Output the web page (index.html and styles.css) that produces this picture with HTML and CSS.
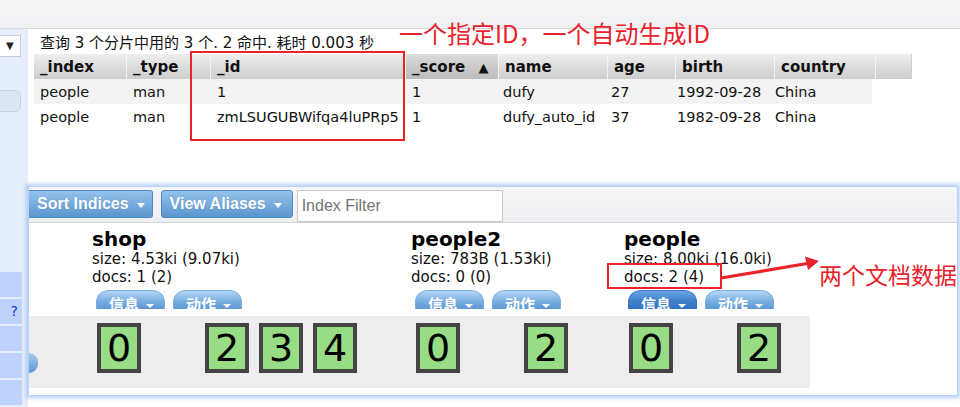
FILE: index.html
```html
<!DOCTYPE html>
<html lang="zh-CN">
<head>
<meta charset="utf-8">
<title>elasticsearch-head</title>
<link rel="stylesheet" href="styles.css">
</head>
<body>
<div class="page">
  <header class="topbar"></header>
  <div class="frame">
    <aside class="side">
      <div class="side-select">▼</div>
      <div class="side-pill"></div>
      <div class="side-cells">
        <div class="cell"></div>
        <div class="cell"><span class="help">?</span></div>
        <div class="cell"></div>
        <div class="cell"></div>
        <div class="cell"></div>
      </div>
    </aside>
    <main class="main">
      <section class="results">
        <p class="summary">查询 3 个分片中用的 3 个. 2 命中. 耗时 0.003 秒</p>
        <div class="table">
          <div class="thead">
            <div class="th c1">_index</div>
            <div class="th c2">_type</div>
            <div class="th c3">_id</div>
            <div class="th c4 sorted">_score <span class="arrow">▲</span></div>
            <div class="th c5">name</div>
            <div class="th c6">age</div>
            <div class="th c7">birth</div>
            <div class="th c8">country</div>
            <div class="th c9"></div>
          </div>
          <div class="trow odd">
            <div class="td c1">people</div>
            <div class="td c2">man</div>
            <div class="td c3">1</div>
            <div class="td c4">1</div>
            <div class="td c5 b5">dufy</div>
            <div class="td c6 b6">27</div>
            <div class="td c7 b7">1992-09-28</div>
            <div class="td c8 b8">China</div>
          </div>
          <div class="trow">
            <div class="td c1">people</div>
            <div class="td c2">man</div>
            <div class="td c3">zmLSUGUBWifqa4luPRp5</div>
            <div class="td c4">1</div>
            <div class="td c5 b5">dufy_auto_id</div>
            <div class="td c6 b6">37</div>
            <div class="td c7 b7">1982-09-28</div>
            <div class="td c8 b8">China</div>
          </div>
        </div>
      </section>
      <section class="panel">
        <div class="toolbar">
          <button class="tbtn first">Sort Indices<i class="caret"></i></button>
          <button class="tbtn">View Aliases<i class="caret"></i></button>
          <input class="filter" type="text" placeholder="Index Filter">
        </div>
        <div class="cluster">
          <div class="ihead"></div>
          <div class="ihead">
            <div class="iname">shop</div>
            <div class="iline">size: 4.53ki (9.07ki)</div>
            <div class="iline">docs: 1 (2)</div>
            <div class="ibtns">
              <div class="ibtn"><span class="ilabel">信息<i class="caret sm"></i></span></div>
              <div class="ibtn"><span class="ilabel">动作<i class="caret sm"></i></span></div>
            </div>
          </div>
          <div class="ihead">
            <div class="iname">people2</div>
            <div class="iline">size: 783B (1.53ki)</div>
            <div class="iline">docs: 0 (0)</div>
            <div class="ibtns">
              <div class="ibtn"><span class="ilabel">信息<i class="caret sm"></i></span></div>
              <div class="ibtn"><span class="ilabel">动作<i class="caret sm"></i></span></div>
            </div>
          </div>
          <div class="ihead">
            <div class="iname">people</div>
            <div class="iline">size: 8.00ki (16.0ki)</div>
            <div class="iline">docs: 2 (4)</div>
            <div class="ibtns">
              <div class="ibtn active"><span class="ilabel">信息<i class="caret sm"></i></span></div>
              <div class="ibtn"><span class="ilabel">动作<i class="caret sm"></i></span></div>
            </div>
          </div>

          <div class="srow node"><div class="node-btn"></div></div>
          <div class="srow">
            <div class="shard">0</div>
            <div class="slot"></div>
            <div class="shard">2</div>
            <div class="shard">3</div>
            <div class="shard">4</div>
          </div>
          <div class="srow">
            <div class="shard">0</div>
            <div class="slot"></div>
            <div class="shard">2</div>
          </div>
          <div class="srow">
            <div class="shard">0</div>
            <div class="slot"></div>
            <div class="shard">2</div>
          </div>
        </div>
      </section>
    </main>
  </div>

  <div class="note note-top">一个指定ID，一个自动生成ID</div>
  <div class="mark mark-id"></div>
  <div class="mark mark-docs"></div>
  <svg class="pointer" width="960" height="407" viewBox="0 0 960 407">
    <line x1="721" y1="278" x2="810" y2="263" stroke="#e9222b" stroke-width="3.2"/>
    <polygon points="819,261 805,256.5 808,270" fill="#e9222b"/>
  </svg>
  <div class="note note-docs">两个文档数据</div>
</div>
</body>
</html>
```

FILE: styles.css
```css
* { box-sizing: border-box; }

html, body {
  margin: 0;
  padding: 0;
  width: 960px;
  height: 407px;
  overflow: hidden;
  background: #ffffff;
  font-family: "DejaVu Sans", Verdana, "Noto Sans CJK SC", sans-serif;
  color: #111;
}

.page {
  position: relative;
  width: 960px;
  height: 407px;
}

.topbar {
  height: 29px;
  background: linear-gradient(#f6f6f7, #eff0f2);
  border-bottom: 1px solid #d4d6da;
}

.frame {
  display: grid;
  grid-template-columns: 28px 932px;
  height: 378px;
}

/* ---------- sidebar ---------- */
.side {
  background: #e6eefc;
  display: flex;
  flex-direction: column;
  padding-top: 6px;
}

.side-select {
  width: 21px;
  height: 22px;
  background: #fff;
  border: 1px solid #c6cbd3;
  border-left: none;
  font-size: 10px;
  line-height: 20px;
  padding-left: 6px;
  color: #222;
}

.side-pill {
  margin-top: 33px;
  width: 21px;
  height: 22px;
  background: #dde5f1;
  border: 1px solid #c9d2e0;
  border-left: none;
  border-radius: 0 6px 6px 0;
}

.side-cells {
  margin-top: 160px;
  display: flex;
  flex-direction: column;
  gap: 2px;
  width: 22px;
}

.cell {
  height: 25px;
  background: #bfd3fa;
}

.help {
  display: block;
  text-align: right;
  padding-right: 4px;
  font-size: 14px;
  line-height: 25px;
  color: #1a2ee0;
}

/* ---------- results ---------- */
.main {
  display: flex;
  flex-direction: column;
}

.results {
  height: 157px;
  padding-top: 5px;
}

.summary {
  margin: 0 0 0 12px;
  font-size: 15px;
  line-height: 19px;
  height: 19px;
  color: #111;
}

.table {
  margin: 1px 0 0 6px;
}

.thead, .trow {
  display: flex;
}

.thead {
  height: 25px;
}

.th {
  height: 25px;
  background: linear-gradient(#eeeeee, #cdcdcd);
  border-right: 1px solid #f4f4f4;
  font-weight: bold;
  font-size: 15px;
  line-height: 26px;
  padding-left: 6px;
  color: #111;
  white-space: nowrap;
}

.th.sorted {
  background: linear-gradient(#dadada, #bcbcbc);
}

.th .arrow {
  font-size: 13px;
  margin-left: 8px;
}

.th.c9 {
  border-right: 1px solid #cfcfcf;
}

.c1 { width: 93px; }
.c2 { width: 84px; }
.c3 { width: 195px; }
.c4 { width: 93px; }
.c5 { width: 109px; }
.c6 { width: 68px; }
.c7 { width: 99px; }
.c8 { width: 101px; }
.c9 { width: 36px; }

.trow {
  height: 25px;
  width: 838px;
}

.trow.odd {
  background: #f3f3f3;
}

.trow + .trow:not(.odd) {
  height: 24px;
}

.td {
  font-size: 14.5px;
  line-height: 26px;
  padding-left: 6px;
  white-space: nowrap;
  color: #111;
}

.td.b5 { width: 108px; padding-left: 4px; }
.td.b6 { width: 67px; padding-left: 4px; }
.td.b7 { width: 98px; padding-left: 3px; }
.td.b8 { width: 96px; padding-left: 3px; }

/* ---------- cluster panel ---------- */
.panel {
  width: 930px;
  height: 210px;
  border: 1px solid #b8d2f6;
  box-shadow: 0 0 4px 2px rgba(120, 170, 245, 0.55);
  background: #fff;
}

.toolbar {
  height: 36px;
  background: linear-gradient(#f6f6f7, #eeeff1);
  border-bottom: 1px solid #d2d4d8;
  display: flex;
  align-items: flex-start;
  padding-top: 3px;
  gap: 8px;
}

.tbtn {
  height: 28px;
  padding: 0 10px 0 8px;
  border: 1px solid #4e88c4;
  border-radius: 3px;
  background: linear-gradient(#93c2ec, #5b96cf);
  color: #fff;
  font-family: "Liberation Sans", Arial, sans-serif;
  font-weight: bold;
  font-size: 16px;
  line-height: 26px;
  display: flex;
  align-items: center;
  white-space: nowrap;
  flex: none;
  text-shadow: 0 0 1px rgba(40, 80, 140, 0.4);
}

.tbtn.first {
  border-left: none;
  border-radius: 0 3px 3px 0;
  padding-right: 7px;
}

.caret {
  display: inline-block;
  width: 0;
  height: 0;
  border-left: 4.5px solid transparent;
  border-right: 4.5px solid transparent;
  border-top: 5px solid #fff;
  margin-left: 8px;
  margin-top: 2px;
}

.caret.sm {
  border-left-width: 4px;
  border-right-width: 4px;
  border-top-width: 4px;
  margin-left: 7px;
  margin-top: 0;
  vertical-align: middle;
}

.filter {
  width: 206px;
  height: 32px;
  margin-left: -4px;
  border: 1px solid #c9c9c9;
  background: #fff;
  font-family: "Liberation Sans", Arial, sans-serif;
  font-size: 16px;
  padding: 0 4px;
  color: #333;
}

.filter::placeholder {
  color: #757575;
}

.cluster {
  display: grid;
  grid-template-columns: 63px 319px 213px 186px;
  grid-template-rows: 93px 72px;
}

.ihead {
  padding-top: 5px;
}

.iname {
  font-weight: bold;
  font-size: 20px;
  line-height: 22px;
  color: #000;
}

.iline {
  font-size: 15px;
  line-height: 18px;
  color: #111;
}

.ibtns {
  display: flex;
  gap: 8px;
  margin: 4px 0 0 4px;
}

.ibtn {
  width: 69px;
  height: 19px;
  border-radius: 13px 13px 0 0 / 12px 12px 0 0;
  background: linear-gradient(#b6d6f4, #7ab0e3 55%, #5d98d3);
  border: 1px solid #7aaee0;
  border-bottom: none;
}

.ibtn.active {
  background: linear-gradient(#6aa6e4, #3f80cb 55%, #3273c0);
  border-color: #3a76bf;
}

.ilabel {
  display: block;
  height: 26px;
  color: #fff;
  font-family: "Noto Sans CJK SC", sans-serif;
  font-weight: bold;
  font-size: 15px;
  line-height: 26px;
  text-align: center;
  padding-left: 2px;
}

.srow {
  background: #eeeeee;
  display: flex;
  gap: 10px;
  padding: 7px 0 0 5px;
}

.srow.node {
  padding: 37px 0 0 0;
}

.node-btn {
  width: 9px;
  height: 20px;
  border-radius: 0 10px 10px 0;
  background: linear-gradient(#a6cbef, #5d98d3);
}

.shard, .slot {
  width: 44px;
  height: 50px;
  flex: none;
}

.shard {
  border: 4px solid #444;
  background: #98dc85;
  color: #000;
  font-size: 38px;
  line-height: 42px;
  text-align: center;
}

/* ---------- annotations (overlay) ---------- */
.note {
  position: absolute;
  color: #e9222b;
  font-family: "Noto Sans CJK SC", sans-serif;
  white-space: nowrap;
}

.note-top {
  left: 399px;
  top: 18px;
  font-size: 24px;
  line-height: 30px;
}

.note-docs {
  left: 819px;
  top: 259px;
  font-size: 23px;
  line-height: 30px;
}

.mark {
  position: absolute;
  border: 2px solid #e9222b;
}

.mark-id {
  left: 190px;
  top: 51px;
  width: 215px;
  height: 90px;
}

.mark-docs {
  left: 607px;
  top: 263px;
  width: 115px;
  height: 26px;
}

.pointer {
  position: absolute;
  left: 0;
  top: 0;
  pointer-events: none;
}
```
